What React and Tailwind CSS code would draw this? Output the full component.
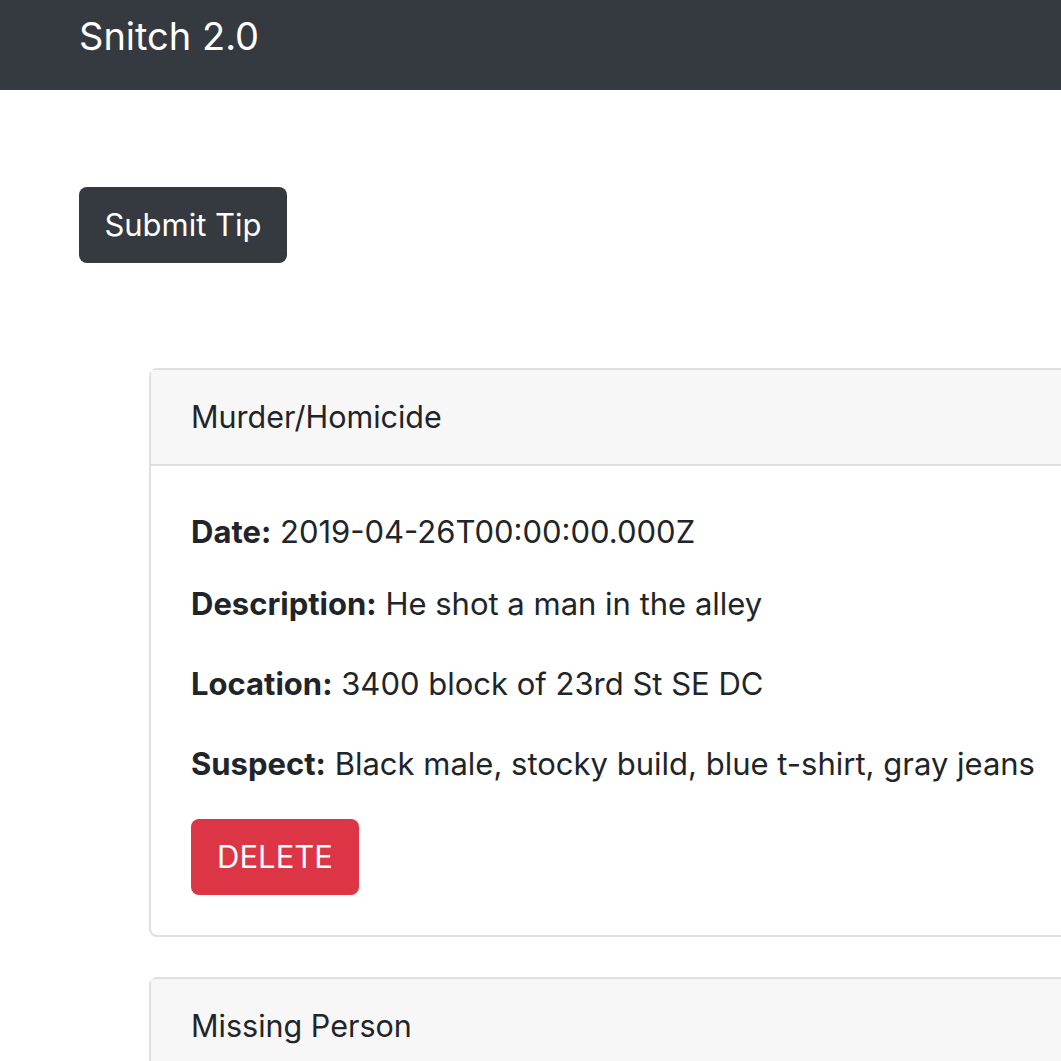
export default function App() {
  const tips = [
    {
      type: 'Murder/Homicide',
      date: '2019-04-26T00:00:00.000Z',
      description: 'He shot a man in the alley',
      location: '3400 block of 23rd St SE DC',
      suspect: 'Black male, stocky build, blue t-shirt, gray jeans',
    },
    {
      type: 'Missing Person',
      date: '2019-04-25T00:00:00.000Z',
      description: 'Last seen near the metro',
      location: 'Anacostia DC',
      suspect: 'Unknown',
    },
  ]

  return (
    <div className="h-[1061px] w-[1061px] overflow-hidden bg-white font-['Inter','Liberation_Sans',sans-serif] text-[#212529]">
      {/* Navbar */}
      <nav className="flex h-[90px] items-start bg-[#343a40] px-[79px] pt-[17px]">
        <span className="text-[38px] leading-none text-white">Snitch 2.0</span>
      </nav>

      <div className="px-[79px] pt-[97px]">
        <button className="h-[76px] w-[208px] rounded-[8px] bg-[#343a40] text-[31px] text-white">
          Submit Tip
        </button>
      </div>

      <div className="flex w-[1300px] flex-col gap-[40px] pl-[149px] pt-[105px]">
        {tips.map((tip) => (
          <div key={tip.type} className="rounded-[8px] border-2 border-[#dfdfdf]">
            <div className="flex h-[96px] items-center border-b-2 border-[#dfdfdf] bg-[#f7f7f7] px-[40px] text-[30.5px]">
              {tip.type}
            </div>
            <div className="px-[40px] pt-[44px] pb-[40px] text-[31px]">
              <p className="leading-[44px]">
                <b className="font-bold">Date:</b> {tip.date}
              </p>
              <p className="mt-[28px] leading-[44px]">
                <b className="font-bold">Description:</b> {tip.description}
              </p>
              <p className="mt-[36px] leading-[44px]">
                <b className="font-bold">Location:</b> {tip.location}
              </p>
              <p className="mt-[36px] leading-[44px]">
                <b className="font-bold">Suspect:</b> {tip.suspect}
              </p>
              <button className="mt-[33px] h-[76px] w-[168px] rounded-[8px] bg-[#dc3545] text-[31px] text-white">
                DELETE
              </button>
            </div>
          </div>
        ))}
      </div>
    </div>
  )
}
